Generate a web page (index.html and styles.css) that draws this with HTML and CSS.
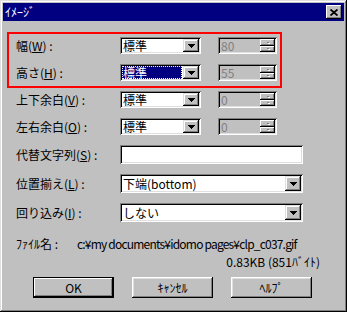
FILE: index.html
```html
<!DOCTYPE html>
<html>
<head>
<meta charset="utf-8">
<link rel="stylesheet" href="styles.css">
</head>
<body>
<div class="window">
  <div class="titlebar">
    <span class="title">ｲﾒｰｼﾞ</span>
    <span class="close"><svg width="8" height="7" viewBox="0 0 8 7"><path d="M0.5 0.5L7.5 6.5M7.5 0.5L0.5 6.5" stroke="#000" stroke-width="1.8" fill="none"/></svg></span>
  </div>
  <div class="content">
    <div class="rows">
      <div class="row">
        <span class="lbl">幅(<u>W</u>) :</span>
        <div class="combo"><span class="val">標準</span><span class="arrow"><svg width="7" height="4" viewBox="0 0 7 4"><path d="M0 0h7v1h-1v1h-1v1h-1v1h-1v-1h-1v-1h-1v-1h-1z"/></svg></span></div>
        <div class="spin"><span class="num">80</span><span class="spinbtns"><span class="sb"><i></i></span><span class="sb"><i></i></span></span></div>
      </div>
      <div class="row">
        <span class="lbl">高さ(<u>H</u>) :</span>
        <div class="combo"><span class="val sel">標準</span><span class="arrow"><svg width="7" height="4" viewBox="0 0 7 4"><path d="M0 0h7v1h-1v1h-1v1h-1v1h-1v-1h-1v-1h-1v-1h-1z"/></svg></span></div>
        <div class="spin"><span class="num">55</span><span class="spinbtns"><span class="sb"><i></i></span><span class="sb"><i></i></span></span></div>
      </div>
      <div class="row">
        <span class="lbl">上下余白(<u>V</u>) :</span>
        <div class="combo"><span class="val">標準</span><span class="arrow"><svg width="7" height="4" viewBox="0 0 7 4"><path d="M0 0h7v1h-1v1h-1v1h-1v1h-1v-1h-1v-1h-1v-1h-1z"/></svg></span></div>
        <div class="spin"><span class="num">0</span><span class="spinbtns"><span class="sb"><i></i></span><span class="sb"><i></i></span></span></div>
      </div>
      <div class="row">
        <span class="lbl">左右余白(<u>O</u>) :</span>
        <div class="combo"><span class="val">標準</span><span class="arrow"><svg width="7" height="4" viewBox="0 0 7 4"><path d="M0 0h7v1h-1v1h-1v1h-1v1h-1v-1h-1v-1h-1v-1h-1z"/></svg></span></div>
        <div class="spin"><span class="num">0</span><span class="spinbtns"><span class="sb"><i></i></span><span class="sb"><i></i></span></span></div>
      </div>
      <div class="row wide">
        <span class="lbl">代替文字列(<u>S</u>) :</span>
        <div class="field"></div>
      </div>
      <div class="row wide">
        <span class="lbl">位置揃え(<u>L</u>) :</span>
        <div class="combo wide-combo"><span class="val">下端(bottom)</span><span class="arrow"><svg width="7" height="4" viewBox="0 0 7 4"><path d="M0 0h7v1h-1v1h-1v1h-1v1h-1v-1h-1v-1h-1v-1h-1z"/></svg></span></div>
      </div>
      <div class="row wide">
        <span class="lbl">回り込み(<u>I</u>) :</span>
        <div class="combo wide-combo"><span class="val">しない</span><span class="arrow"><svg width="7" height="4" viewBox="0 0 7 4"><path d="M0 0h7v1h-1v1h-1v1h-1v1h-1v-1h-1v-1h-1v-1h-1z"/></svg></span></div>
      </div>
    </div>
    <div class="fileinfo">
      <div class="fileline"><span class="flabel">ﾌｧｲﾙ名 :</span><span class="path">c:¥my documents¥idomo pages¥clp_c037.gif</span></div>
      <div class="size">0.83KB (851ﾊﾞｲﾄ)</div>
    </div>
    <div class="buttons">
      <button class="btn default">OK</button>
      <button class="btn">ｷｬﾝｾﾙ</button>
      <button class="btn">ﾍﾙﾌﾟ</button>
    </div>
  </div>
  <div class="highlight"></div>
</div>
</body>
</html>
```
FILE: styles.css
```css
html, body {
  margin: 0;
  padding: 0;
  background: #c0c0c0;
}

.window {
  position: relative;
  width: 347px;
  height: 312px;
  box-sizing: border-box;
  padding: 3px;
  background: #c0c0c0;
  box-shadow: inset -1px -1px 0 #000, inset 1px 1px 0 #dfdfdf, inset -2px -2px 0 #808080, inset 2px 2px 0 #fff;
  font-family: "Noto Sans CJK JP", "Noto Sans", sans-serif;
  font-size: 12px;
  line-height: 14px;
  color: #000;
}

.titlebar {
  height: 18px;
  background: #000080;
  color: #fff;
  display: flex;
  align-items: center;
  justify-content: space-between;
  padding: 0 2px;
}

.title {
  font-size: 12px;
}

.close {
  width: 16px;
  height: 14px;
  background: #c0c0c0;
  box-shadow: inset -1px -1px 0 #000, inset 1px 1px 0 #fff, inset -2px -2px 0 #808080;
  display: flex;
  align-items: center;
  justify-content: center;
}

.close svg { display: block; }

.content {
  padding: 16px 0 0 13px;
}

.rows {
  display: flex;
  flex-direction: column;
  gap: 10px;
}

.row {
  display: flex;
  align-items: center;
  height: 17px;
}

.row.wide {
  height: 19px;
}

.lbl {
  width: 104px;
  flex: none;
  white-space: nowrap;
}

.lbl u {
  text-decoration: underline;
}

.combo, .spin, .field {
  box-sizing: border-box;
  height: 100%;
  padding: 2px;
  display: flex;
  align-items: stretch;
  box-shadow: inset 1px 1px 0 #808080, inset -1px -1px 0 #fff, inset 2px 2px 0 #000, inset -2px -2px 0 #dfdfdf;
}

.combo {
  width: 81px;
  background: #fff;
}

.combo.wide-combo {
  width: 183px;
}

.field {
  width: 183px;
  background: #fff;
}

.val {
  flex: 1;
  display: flex;
  align-items: center;
  padding-left: 1px;
  margin-right: 1px;
  white-space: nowrap;
  line-height: 13px;
}

.val.sel {
  background: #000080;
  color: #fff;
  outline: 1px dotted #fff;
  outline-offset: -1px;
}

.arrow {
  width: 16px;
  flex: none;
  background: #c0c0c0;
  box-shadow: inset -1px -1px 0 #000, inset 1px 1px 0 #dfdfdf, inset -2px -2px 0 #808080, inset 2px 2px 0 #fff;
  display: flex;
  align-items: center;
  justify-content: center;
}

.arrow svg { display: block; }

.spin {
  width: 59px;
  margin-left: 17px;
  background: #c0c0c0;
}

.num {
  flex: 1;
  color: #808080;
  display: flex;
  align-items: center;
  padding-left: 1px;
  line-height: 13px;
}

.spinbtns {
  width: 15px;
  display: flex;
  flex-direction: column;
}

.sb {
  flex: 1;
  background: #c0c0c0;
  box-shadow: inset -1px -1px 0 #000, inset 1px 1px 0 #fff, inset -2px -2px 0 #808080;
  display: flex;
  align-items: center;
  justify-content: center;
}

.sb i {
  display: block;
  width: 2px;
  height: 1px;
  background: #808080;
  box-shadow: 1px 1px 0 #fff;
}

.fileinfo {
  margin-top: 15px;
  display: flex;
  flex-direction: column;
  gap: 4px;
}

.fileline {
  display: flex;
  white-space: nowrap;
}

.flabel {
  width: 61px;
  flex: none;
}

.path {
  letter-spacing: -0.8px;
}

.size {
  text-align: right;
  padding-right: 24px;
  white-space: nowrap;
}

.buttons {
  margin: 8px 0 0 17px;
  display: flex;
  gap: 18px;
}

.btn {
  width: 81px;
  height: 21px;
  padding: 0;
  border: none;
  background: #c0c0c0;
  font-family: "Noto Sans CJK JP", "Noto Sans", sans-serif;
  font-size: 12px;
  font-weight: normal;
  color: #000;
  box-shadow: inset -1px -1px 0 #000, inset 1px 1px 0 #fff, inset -2px -2px 0 #808080, inset 2px 2px 0 #dfdfdf;
}

.btn.default {
  box-shadow: inset 0 0 0 1px #000, inset -2px -2px 0 #000, inset 2px 2px 0 #fff, inset -3px -3px 0 #808080;
}

.highlight {
  position: absolute;
  left: 7px;
  top: 32px;
  width: 275px;
  height: 56px;
  box-sizing: border-box;
  border: 2px solid #ff0000;
  pointer-events: none;
}
```
